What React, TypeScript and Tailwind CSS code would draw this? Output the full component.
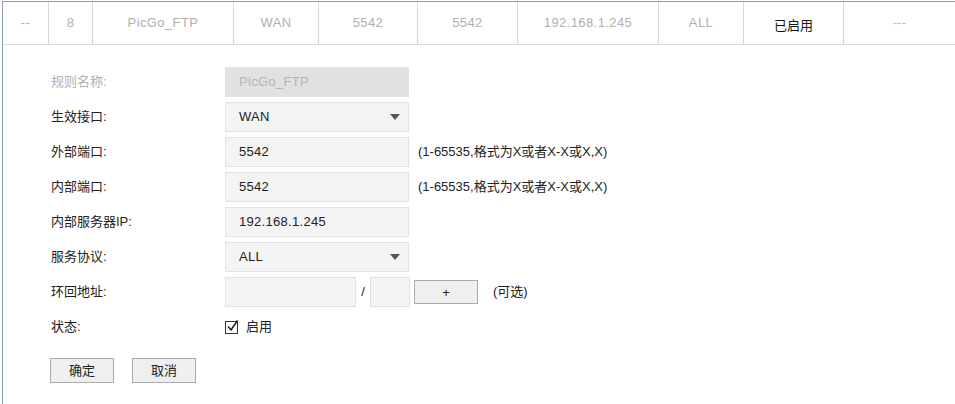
import React from 'react';

const font = { fontFamily: '"Liberation Sans", "Noto Sans CJK SC", sans-serif' };

const cols = [
  { w: 'w-[46px]', text: '--' },
  { w: 'w-[44px]', text: '8' },
  { w: 'w-[141px]', text: 'PicGo_FTP' },
  { w: 'w-[85px]', text: 'WAN' },
  { w: 'w-[99px]', text: '5542' },
  { w: 'w-[100px]', text: '5542' },
  { w: 'w-[141px]', text: '192.168.1.245' },
  { w: 'w-[85px]', text: 'ALL' },
];

function Caret() {
  return (
    <svg width="10" height="6" viewBox="0 0 10 6" className="shrink-0">
      <path d="M0 0 L10 0 L5 6 Z" fill="#555" />
    </svg>
  );
}

function Row({ label, muted, children }: { label: string; muted?: boolean; children: React.ReactNode }) {
  return (
    <div className="flex items-center h-[30px]">
      <div className={`w-[174px] shrink-0 ${muted ? 'text-[#b0b0b0]' : 'text-[#222]'}`}>{label}</div>
      {children}
    </div>
  );
}

function Field({ value, select, disabled }: { value: string; select?: boolean; disabled?: boolean }) {
  return (
    <div
      className={`w-[184px] h-[30px] border flex items-center justify-between pl-[13px] pr-[8px] ${
        disabled ? 'bg-[#e1e1e1] border-[#e1e1e1] text-[#b4b4b4]' : 'bg-[#f4f4f4] border-[#e2e2e2] text-[#222]'
      }`}
    >
      <span className="tracking-[0.3px]">{value}</span>
      {select && <Caret />}
    </div>
  );
}

export default function App() {
  return (
    <div className="w-[955px] h-[404px] bg-white overflow-hidden text-[13px] pt-[1px] pl-[2px]" style={font}>
      <div className="h-[403px] border-l border-t border-[#8c9db0]">
        {/* table row */}
        <div className="flex h-[43px] border-b border-[#d9d9d9]">
          {cols.map((c, i) => (
            <div key={i} className={`${c.w} shrink-0 border-r border-[#d6d6d6] flex items-center justify-center text-[#b0b0b0] tracking-[0.4px]`}>
              {c.text}
            </div>
          ))}
          <div className="w-[100px] shrink-0 border-r border-[#d6d6d6] flex items-center justify-center text-[#111] pt-[5px]">
            已启用
          </div>
          <div className="flex-1 flex items-center justify-center text-[#bbb]">---</div>
        </div>

        {/* edit form */}
        <div className="pl-[48px] pt-[22px] flex flex-col gap-[5px]">
          <Row label="规则名称:" muted>
            <Field value="PicGo_FTP" disabled />
          </Row>
          <Row label="生效接口:">
            <Field value="WAN" select />
          </Row>
          <Row label="外部端口:">
            <Field value="5542" />
            <span className="ml-[9px] text-[#222]">(1-65535,格式为X或者X-X或X,X)</span>
          </Row>
          <Row label="内部端口:">
            <Field value="5542" />
            <span className="ml-[9px] text-[#222]">(1-65535,格式为X或者X-X或X,X)</span>
          </Row>
          <Row label="内部服务器IP:">
            <Field value="192.168.1.245" />
          </Row>
          <Row label="服务协议:">
            <Field value="ALL" select />
          </Row>
          <Row label="环回地址:">
            <div className="w-[131px] h-[30px] bg-[#f4f4f4] border border-[#e2e2e2]" />
            <span className="w-[14px] text-center text-[#222]">/</span>
            <div className="w-[40px] h-[30px] bg-[#f4f4f4] border border-[#e2e2e2]" />
            <button className="ml-[4px] w-[64px] h-[24px] bg-[#efefef] border border-[#ababab] text-[#222] leading-none">+</button>
            <span className="ml-[15px] text-[#222]">(可选)</span>
          </Row>
          <Row label="状态:">
            <div className="flex items-center gap-[7px]">
              <svg width="14" height="14" viewBox="0 0 14 14" className="-mt-[1px]">
                <rect x="0.5" y="1.5" width="12" height="12" fill="#fff" stroke="#333" />
                <path d="M3 6.5 L6 10 L12.5 0.5" fill="none" stroke="#222" strokeWidth="1.6" />
              </svg>
              <span className="text-[#222]">启用</span>
            </div>
          </Row>
          <div className="flex gap-[18px] mt-[11px] -ml-[1px]">
            <button className="w-[64px] h-[25px] bg-[#efefef] border border-[#ababab] text-[#222]">确定</button>
            <button className="w-[64px] h-[25px] bg-[#efefef] border border-[#ababab] text-[#222]">取消</button>
          </div>
        </div>
      </div>
    </div>
  );
}
